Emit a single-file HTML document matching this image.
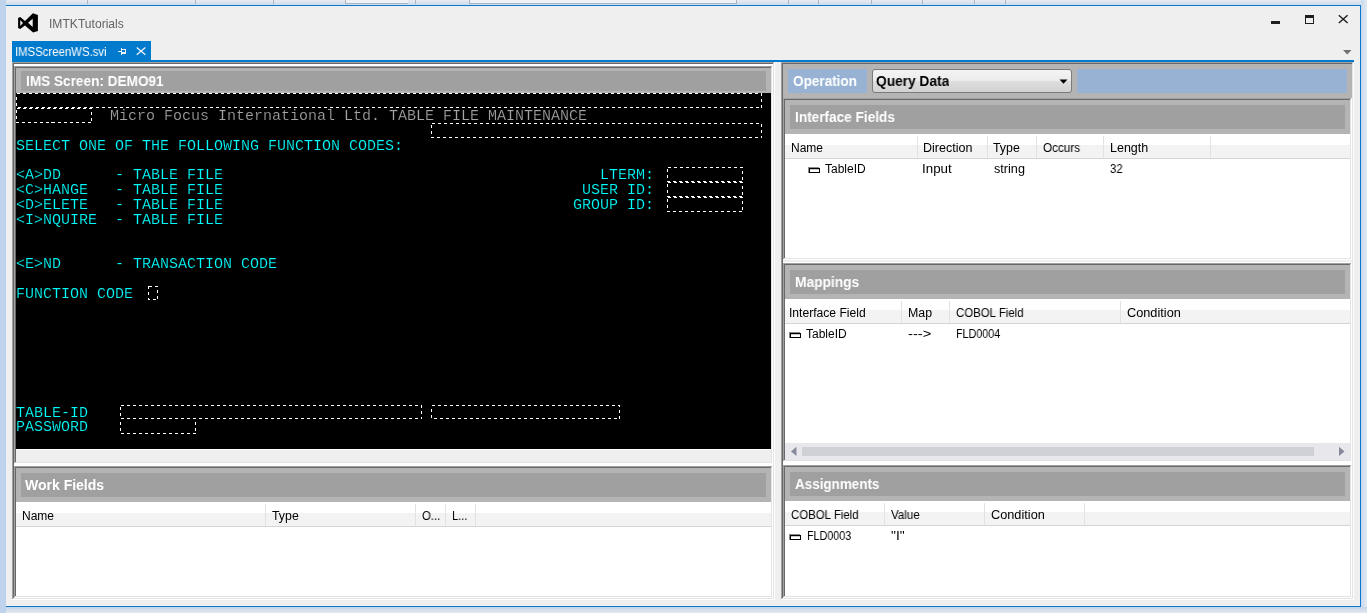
<!DOCTYPE html>
<html><head><meta charset="utf-8"><style>
html,body{margin:0;padding:0;}
body{width:1367px;height:613px;overflow:hidden;position:relative;font-family:"Liberation Sans",sans-serif;}
div,span,svg{position:absolute;}
span{white-space:pre;line-height:1;will-change:transform;}
.title{font-size:12px;color:#626262;}
.tab{font-size:12px;color:#fff;}
.hdr{font-size:14px;font-weight:bold;color:#fff;}
.hdr.dark{color:#000;}
.cell{font-size:12px;color:#000;}
.mono{font-family:"Liberation Mono",monospace;font-size:15px;letter-spacing:0px;-webkit-text-stroke:0.2px #000;}
</style></head><body>
<div style="left:0px;top:0px;width:1367px;height:613px;background:#bfd4ec;"></div>
<div style="left:6px;top:0px;width:1361px;height:5px;background:linear-gradient(#e8ebf0,#cddbea);"></div>
<div style="left:5px;top:0px;width:1px;height:613px;background:#b9d0ea;"></div>
<div style="left:1361px;top:0px;width:6px;height:613px;background:linear-gradient(90deg,#c7d9ee,#e2e9f2);"></div>
<div style="left:6px;top:607px;width:1361px;height:6px;background:linear-gradient(#c3d5ea,#e4e8ee);"></div>
<div style="left:345px;top:0px;width:63px;height:4px;background:#eef1f5;border-left:1px solid #a9b5c3;border-bottom:1px solid #a9b5c3;box-sizing:border-box"></div>
<div style="left:469px;top:0px;width:268px;height:4px;background:#eef1f5;border-left:1px solid #a9b5c3;border-right:1px solid #a9b5c3;border-bottom:1px solid #a9b5c3;box-sizing:border-box"></div>
<div style="left:87px;top:0px;width:1px;height:4px;background:#aab7c6;"></div>
<div style="left:195px;top:0px;width:1px;height:4px;background:#aab7c6;"></div>
<div style="left:273px;top:0px;width:1px;height:4px;background:#aab7c6;"></div>
<div style="left:415px;top:0px;width:1px;height:4px;background:#aab7c6;"></div>
<div style="left:788px;top:0px;width:1px;height:4px;background:#aab7c6;"></div>
<div style="left:818px;top:0px;width:1px;height:4px;background:#aab7c6;"></div>
<div style="left:871px;top:0px;width:1px;height:4px;background:#aab7c6;"></div>
<div style="left:922px;top:0px;width:1px;height:4px;background:#aab7c6;"></div>
<div style="left:974px;top:0px;width:1px;height:4px;background:#aab7c6;"></div>
<div style="left:1005px;top:0px;width:1px;height:4px;background:#aab7c6;"></div>
<div style="left:6px;top:6px;width:1354px;height:600px;background:#efefef;"></div>
<div style="left:6px;top:5px;width:1355px;height:1px;background:#0a78cf;"></div>
<div style="left:1360px;top:5px;width:1px;height:602px;background:#0a78cf;"></div>
<div style="left:6px;top:606px;width:1355px;height:1px;background:#0a78cf;"></div>
<svg style="position:absolute;left:0;top:0" width="60" height="40"><path fill="#000" fill-rule="evenodd" d="M32.9,13.2 L37.9,15.1 L37.9,30.9 L33.1,32.6 L25,25.4 L20.2,29 L18.1,27.9 L18.1,18.1 L20.2,17 L25,20.9 Z M28.1,22.8 L32.7,18.7 L32.7,27.1 Z M20.3,20.1 L22.9,23.1 L20.3,26.1 Z"/></svg>
<span class="title" style="left:48.99px;top:18px;transform:scaleX(1.0078);transform-origin:0 0;">IMTKTutorials</span>
<div style="left:1271px;top:21px;width:9px;height:3px;background:#1e1e1e;"></div>
<div style="left:1305px;top:15px;width:9px;height:9px;background:transparent;border:1px solid #1e1e1e;border-top-width:3px;box-sizing:border-box"></div>
<svg style="position:absolute;left:1336px;top:13px" width="14" height="13"><path d="M2.8,2.3 L11.6,10 M11.6,2.3 L2.8,10" stroke="#1e1e1e" stroke-width="1.4"/></svg>
<div style="left:12px;top:41px;width:139px;height:21px;background:#007acc;"></div>
<div style="left:12px;top:60px;width:1342px;height:2px;background:#007acc;"></div>
<span class="tab" style="left:15.05px;top:46px;transform:scaleX(0.9472);transform-origin:0 0;">IMSScreenWS.svi</span>
<svg style="position:absolute;left:116px;top:46px" width="14" height="12" shape-rendering="crispEdges"><path fill="#eaf1f8" d="M2,5 h4 v1 h-4 z M5,2 h1 v7 h-1 z M6,3 h4 v1 h-4 z M9,3 h1 v5 h-1 z M6,6 h4 v2 h-4 z"/></svg>
<svg style="position:absolute;left:134px;top:45px" width="14" height="12"><path d="M2.7,2.4 L11.4,9.7 M11.4,2.4 L2.7,9.7" stroke="#eaf1f8" stroke-width="1.3"/></svg>
<svg style="position:absolute;left:1342px;top:49px" width="11" height="7"><path d="M1,1 L9.5,1 L5.25,5.5 Z" fill="#717171"/></svg>
<div style="left:14px;top:64px;width:759px;height:534px;background:#ffffff;"></div>
<div style="left:12px;top:62px;width:763px;height:1px;background:#a0a0a0;"></div>
<div style="left:12px;top:62px;width:1px;height:538px;background:#a0a0a0;"></div>
<div style="left:13px;top:63px;width:761px;height:1px;background:#696969;"></div>
<div style="left:13px;top:63px;width:1px;height:536px;background:#696969;"></div>
<div style="left:12px;top:599px;width:763px;height:1px;background:#ffffff;"></div>
<div style="left:774px;top:62px;width:1px;height:538px;background:#ffffff;"></div>
<div style="left:13px;top:598px;width:761px;height:1px;background:#e3e3e3;"></div>
<div style="left:773px;top:63px;width:1px;height:536px;background:#e3e3e3;"></div>
<div style="left:16px;top:68px;width:755px;height:394px;background:#efefef;"></div>
<div style="left:14px;top:66px;width:759px;height:1px;background:#a0a0a0;"></div>
<div style="left:14px;top:66px;width:1px;height:398px;background:#a0a0a0;"></div>
<div style="left:15px;top:67px;width:757px;height:1px;background:#696969;"></div>
<div style="left:15px;top:67px;width:1px;height:396px;background:#696969;"></div>
<div style="left:14px;top:463px;width:759px;height:1px;background:#ffffff;"></div>
<div style="left:772px;top:66px;width:1px;height:398px;background:#ffffff;"></div>
<div style="left:15px;top:462px;width:757px;height:1px;background:#e3e3e3;"></div>
<div style="left:771px;top:67px;width:1px;height:396px;background:#e3e3e3;"></div>
<div style="left:16px;top:68px;width:755px;height:25px;background:#b4b4b4;"></div>
<div style="left:21px;top:71px;width:745px;height:20px;background:#a0a0a0;"></div>
<span class="hdr" style="left:25.75px;top:74px;transform:scaleX(0.9717);transform-origin:0 0;">IMS Screen: DEMO91</span>
<div style="left:16px;top:93px;width:755px;height:356px;background:#000;"></div>
<div style="left:16px;top:449px;width:755px;height:1px;background:#ffffff;"></div>
<div style="left:16px;top:468px;width:755px;height:128px;background:#ffffff;"></div>
<div style="left:14px;top:466px;width:759px;height:1px;background:#a0a0a0;"></div>
<div style="left:14px;top:466px;width:1px;height:132px;background:#a0a0a0;"></div>
<div style="left:15px;top:467px;width:757px;height:1px;background:#696969;"></div>
<div style="left:15px;top:467px;width:1px;height:130px;background:#696969;"></div>
<div style="left:14px;top:597px;width:759px;height:1px;background:#ffffff;"></div>
<div style="left:772px;top:466px;width:1px;height:132px;background:#ffffff;"></div>
<div style="left:15px;top:596px;width:757px;height:1px;background:#e3e3e3;"></div>
<div style="left:771px;top:467px;width:1px;height:130px;background:#e3e3e3;"></div>
<div style="left:16px;top:468px;width:755px;height:34px;background:#b4b4b4;"></div>
<div style="left:21px;top:473px;width:745px;height:24px;background:#a0a0a0;"></div>
<span class="hdr" style="left:24.95px;top:478px;">Work Fields</span>
<div style="left:783px;top:64px;width:569px;height:534px;background:#ffffff;"></div>
<div style="left:781px;top:62px;width:573px;height:1px;background:#a0a0a0;"></div>
<div style="left:781px;top:62px;width:1px;height:538px;background:#a0a0a0;"></div>
<div style="left:782px;top:63px;width:571px;height:1px;background:#696969;"></div>
<div style="left:782px;top:63px;width:1px;height:536px;background:#696969;"></div>
<div style="left:781px;top:599px;width:573px;height:1px;background:#ffffff;"></div>
<div style="left:1353px;top:62px;width:1px;height:538px;background:#ffffff;"></div>
<div style="left:782px;top:598px;width:571px;height:1px;background:#e3e3e3;"></div>
<div style="left:1352px;top:63px;width:1px;height:536px;background:#e3e3e3;"></div>
<div style="left:783px;top:64px;width:569px;height:34px;background:#b4b4b4;"></div>
<div style="left:788px;top:69px;width:79px;height:24px;background:#97b2d2;"></div>
<span class="hdr" style="left:792.85px;top:74px;transform:scaleX(0.967);transform-origin:0 0;">Operation</span>
<div style="left:872px;top:69px;width:200px;height:24px;background:linear-gradient(#f3f3f3 0%,#ececec 48%,#dedede 52%,#d2d2d2 100%);border:1px solid #7c7c7c;border-radius:3px;box-sizing:border-box"></div>
<span class="hdr dark" style="left:875.85px;top:74px;transform:scaleX(0.9798);transform-origin:0 0;">Query Data</span>
<svg style="position:absolute;left:1059px;top:79px" width="10" height="6"><path d="M0.5,0.5 L8.5,0.5 L4.5,4.8 Z" fill="#000"/></svg>
<div style="left:1077px;top:69px;width:270px;height:24px;background:#97b2d2;"></div>
<div style="left:783px;top:260px;width:569px;height:2px;background:#efefef;"></div>
<div style="left:785px;top:100px;width:565px;height:158px;background:#ffffff;"></div>
<div style="left:783px;top:98px;width:569px;height:1px;background:#a0a0a0;"></div>
<div style="left:783px;top:98px;width:1px;height:162px;background:#a0a0a0;"></div>
<div style="left:784px;top:99px;width:567px;height:1px;background:#696969;"></div>
<div style="left:784px;top:99px;width:1px;height:160px;background:#696969;"></div>
<div style="left:783px;top:259px;width:569px;height:1px;background:#ffffff;"></div>
<div style="left:1351px;top:98px;width:1px;height:162px;background:#ffffff;"></div>
<div style="left:784px;top:258px;width:567px;height:1px;background:#e3e3e3;"></div>
<div style="left:1350px;top:99px;width:1px;height:160px;background:#e3e3e3;"></div>
<div style="left:785px;top:100px;width:565px;height:34px;background:#b4b4b4;"></div>
<div style="left:790px;top:105px;width:555px;height:24px;background:#a0a0a0;"></div>
<span class="hdr" style="left:794.65px;top:110px;transform:scaleX(0.9726);transform-origin:0 0;">Interface Fields</span>
<div style="left:785px;top:265px;width:565px;height:195px;background:#ffffff;"></div>
<div style="left:783px;top:263px;width:569px;height:1px;background:#a0a0a0;"></div>
<div style="left:783px;top:263px;width:1px;height:199px;background:#a0a0a0;"></div>
<div style="left:784px;top:264px;width:567px;height:1px;background:#696969;"></div>
<div style="left:784px;top:264px;width:1px;height:197px;background:#696969;"></div>
<div style="left:783px;top:461px;width:569px;height:1px;background:#ffffff;"></div>
<div style="left:1351px;top:263px;width:1px;height:199px;background:#ffffff;"></div>
<div style="left:784px;top:460px;width:567px;height:1px;background:#e3e3e3;"></div>
<div style="left:1350px;top:264px;width:1px;height:197px;background:#e3e3e3;"></div>
<div style="left:785px;top:265px;width:565px;height:34px;background:#b4b4b4;"></div>
<div style="left:790px;top:270px;width:555px;height:24px;background:#a0a0a0;"></div>
<span class="hdr" style="left:794.65px;top:275px;transform:scaleX(0.9825);transform-origin:0 0;">Mappings</span>
<div style="left:785px;top:467px;width:565px;height:129px;background:#ffffff;"></div>
<div style="left:783px;top:465px;width:569px;height:1px;background:#a0a0a0;"></div>
<div style="left:783px;top:465px;width:1px;height:133px;background:#a0a0a0;"></div>
<div style="left:784px;top:466px;width:567px;height:1px;background:#696969;"></div>
<div style="left:784px;top:466px;width:1px;height:131px;background:#696969;"></div>
<div style="left:783px;top:597px;width:569px;height:1px;background:#ffffff;"></div>
<div style="left:1351px;top:465px;width:1px;height:133px;background:#ffffff;"></div>
<div style="left:784px;top:596px;width:567px;height:1px;background:#e3e3e3;"></div>
<div style="left:1350px;top:466px;width:1px;height:131px;background:#e3e3e3;"></div>
<div style="left:785px;top:467px;width:565px;height:34px;background:#b4b4b4;"></div>
<div style="left:790px;top:472px;width:555px;height:24px;background:#a0a0a0;"></div>
<span class="hdr" style="left:794.65px;top:477px;transform:scaleX(0.96);transform-origin:0 0;">Assignments</span>
<div style="left:785px;top:443px;width:565px;height:17px;background:#e8e8ec;"></div>
<div style="left:802px;top:447px;width:512px;height:9px;background:#d0d1d7;"></div>
<svg style="position:absolute;left:789px;top:446px" width="10" height="11"><path d="M7.5,0.8 L7.5,10 L2,5.4 Z" fill="#868999"/></svg>
<svg style="position:absolute;left:1337px;top:446px" width="10" height="11"><path d="M2,0.8 L2,10 L7.5,5.4 Z" fill="#868999"/></svg>
<div style="left:16px;top:513px;width:755px;height:13px;background:#f3f3f3;"></div>
<div style="left:16px;top:526px;width:755px;height:1px;background:#d5d5d5;"></div>
<div style="left:265px;top:504px;width:1px;height:22px;background:#e2e2e2;"></div>
<div style="left:415px;top:504px;width:1px;height:22px;background:#e2e2e2;"></div>
<div style="left:445px;top:504px;width:1px;height:22px;background:#e2e2e2;"></div>
<div style="left:475px;top:504px;width:1px;height:22px;background:#e2e2e2;"></div>
<span class="cell" style="left:21.65px;top:510px;transform:scaleX(0.9896);transform-origin:0 0;">Name</span>
<span class="cell" style="left:271.55px;top:510px;transform:scaleX(1.0288);transform-origin:0 0;">Type</span>
<span class="cell" style="left:422.05px;top:510px;transform:scaleX(0.9473);transform-origin:0 0;">O...</span>
<span class="cell" style="left:451.95px;top:510px;transform:scaleX(0.924);transform-origin:0 0;">L...</span>
<div style="left:785px;top:145px;width:565px;height:13px;background:#f3f3f3;"></div>
<div style="left:785px;top:158px;width:565px;height:1px;background:#d5d5d5;"></div>
<div style="left:917px;top:136px;width:1px;height:22px;background:#e2e2e2;"></div>
<div style="left:987px;top:136px;width:1px;height:22px;background:#e2e2e2;"></div>
<div style="left:1036px;top:136px;width:1px;height:22px;background:#e2e2e2;"></div>
<div style="left:1103px;top:136px;width:1px;height:22px;background:#e2e2e2;"></div>
<div style="left:1210px;top:136px;width:1px;height:22px;background:#e2e2e2;"></div>
<span class="cell" style="left:790.95px;top:142px;transform:scaleX(0.9896);transform-origin:0 0;">Name</span>
<span class="cell" style="left:923.35px;top:142px;transform:scaleX(1.0434);transform-origin:0 0;">Direction</span>
<span class="cell" style="left:993.25px;top:142px;transform:scaleX(1.0288);transform-origin:0 0;">Type</span>
<span class="cell" style="left:1042.85px;top:142px;transform:scaleX(0.9762);transform-origin:0 0;">Occurs</span>
<span class="cell" style="left:1109.55px;top:142px;transform:scaleX(1.0408);transform-origin:0 0;">Length</span>
<div style="left:785px;top:310px;width:565px;height:13px;background:#f3f3f3;"></div>
<div style="left:785px;top:323px;width:565px;height:1px;background:#d5d5d5;"></div>
<div style="left:901px;top:301px;width:1px;height:22px;background:#e2e2e2;"></div>
<div style="left:949px;top:301px;width:1px;height:22px;background:#e2e2e2;"></div>
<div style="left:1120px;top:301px;width:1px;height:22px;background:#e2e2e2;"></div>
<span class="cell" style="left:788.94px;top:307px;transform:scaleX(1.0086);transform-origin:0 0;">Interface Field</span>
<span class="cell" style="left:907.75px;top:307px;transform:scaleX(1.0308);transform-origin:0 0;">Map</span>
<span class="cell" style="left:955.85px;top:307px;transform:scaleX(0.9522);transform-origin:0 0;">COBOL Field</span>
<span class="cell" style="left:1126.85px;top:307px;transform:scaleX(1.0614);transform-origin:0 0;">Condition</span>
<div style="left:785px;top:512px;width:565px;height:13px;background:#f3f3f3;"></div>
<div style="left:785px;top:525px;width:565px;height:1px;background:#d5d5d5;"></div>
<div style="left:884px;top:503px;width:1px;height:22px;background:#e2e2e2;"></div>
<div style="left:984px;top:503px;width:1px;height:22px;background:#e2e2e2;"></div>
<div style="left:1084px;top:503px;width:1px;height:22px;background:#e2e2e2;"></div>
<span class="cell" style="left:790.55px;top:509px;transform:scaleX(0.9522);transform-origin:0 0;">COBOL Field</span>
<span class="cell" style="left:890.85px;top:509px;transform:scaleX(0.9626);transform-origin:0 0;">Value</span>
<span class="cell" style="left:990.65px;top:509px;transform:scaleX(1.0614);transform-origin:0 0;">Condition</span>
<svg style="position:absolute;left:808px;top:167px" width="13" height="7" shape-rendering="crispEdges"><path fill="#8a8a8a" d="M0,0 h11 v1 h-11 z M0,0 h1 v6 h-1 z"/><path fill="#000" d="M1,1 h11 v1 h-11 z M1,1 h1 v5 h-1 z M11,1 h1 v5 h-1 z M1,5 h11 v1 h-11 z"/><path fill="#c8c8c8" d="M2,2 h9 v1 h-9 z"/></svg>
<span class="cell" style="left:825.35px;top:163px;transform:scaleX(0.9922);transform-origin:0 0;">TableID</span>
<span class="cell" style="left:921.94px;top:163px;transform:scaleX(1.1117);transform-origin:0 0;">Input</span>
<span class="cell" style="left:993.85px;top:163px;transform:scaleX(1.0534);transform-origin:0 0;">string</span>
<span class="cell" style="left:1109.55px;top:163px;transform:scaleX(0.9434);transform-origin:0 0;">32</span>
<svg style="position:absolute;left:789px;top:332px" width="13" height="7" shape-rendering="crispEdges"><path fill="#8a8a8a" d="M0,0 h11 v1 h-11 z M0,0 h1 v6 h-1 z"/><path fill="#000" d="M1,1 h11 v1 h-11 z M1,1 h1 v5 h-1 z M11,1 h1 v5 h-1 z M1,5 h11 v1 h-11 z"/><path fill="#c8c8c8" d="M2,2 h9 v1 h-9 z"/></svg>
<span class="cell" style="left:806.35px;top:328px;transform:scaleX(0.9922);transform-origin:0 0;">TableID</span>
<span class="cell" style="left:907.75px;top:328px;transform:scaleX(1.2218);transform-origin:0 0;">---&gt;</span>
<span class="cell" style="left:955.85px;top:328px;transform:scaleX(0.8955);transform-origin:0 0;">FLD0004</span>
<svg style="position:absolute;left:789px;top:534px" width="13" height="7" shape-rendering="crispEdges"><path fill="#8a8a8a" d="M0,0 h11 v1 h-11 z M0,0 h1 v6 h-1 z"/><path fill="#000" d="M1,1 h11 v1 h-11 z M1,1 h1 v5 h-1 z M11,1 h1 v5 h-1 z M1,5 h11 v1 h-11 z"/><path fill="#c8c8c8" d="M2,2 h9 v1 h-9 z"/></svg>
<span class="cell" style="left:806.55px;top:530px;transform:scaleX(0.8955);transform-origin:0 0;">FLD0003</span>
<span class="cell" style="left:890.85px;top:530px;transform:scaleX(1.1558);transform-origin:0 0;">&quot;I&quot;</span>
<span class="mono" style="left:109.5px;top:109px;color:#a4a4a4">Micro Focus International Ltd. TABLE FILE MAINTENANCE</span>
<span class="mono" style="left:15.8px;top:139px;color:#00ffff">SELECT ONE OF THE FOLLOWING FUNCTION CODES:</span>
<span class="mono" style="left:15.8px;top:168px;color:#00ffff">&lt;A&gt;DD      - TABLE FILE</span>
<span class="mono" style="left:15.8px;top:183px;color:#00ffff">&lt;C&gt;HANGE   - TABLE FILE</span>
<span class="mono" style="left:15.8px;top:198px;color:#00ffff">&lt;D&gt;ELETE   - TABLE FILE</span>
<span class="mono" style="left:15.8px;top:213px;color:#00ffff">&lt;I&gt;NQUIRE  - TABLE FILE</span>
<span class="mono" style="left:15.8px;top:257px;color:#00ffff">&lt;E&gt;ND      - TRANSACTION CODE</span>
<span class="mono" style="left:15.8px;top:287px;color:#00ffff">FUNCTION CODE</span>
<span class="mono" style="left:15.8px;top:406px;color:#00ffff">TABLE-ID</span>
<span class="mono" style="left:15.8px;top:420px;color:#00ffff">PASSWORD</span>
<span class="mono" style="left:600.3px;top:168px;color:#00ffff">LTERM:</span>
<span class="mono" style="left:582.3px;top:183px;color:#00ffff">USER ID:</span>
<span class="mono" style="left:572.8px;top:198px;color:#00ffff">GROUP ID:</span>
<svg style="position:absolute;left:0;top:0" width="1367" height="613" shape-rendering="crispEdges"><rect x="16.5" y="93.5" width="745" height="14" fill="none" stroke="#fff" stroke-width="1" stroke-dasharray="3 3"/><rect x="16.5" y="108.5" width="75" height="14" fill="none" stroke="#fff" stroke-width="1" stroke-dasharray="3 3"/><rect x="431.5" y="123.5" width="330" height="14" fill="none" stroke="#fff" stroke-width="1" stroke-dasharray="3 3"/><rect x="667.5" y="167.5" width="75" height="14" fill="none" stroke="#fff" stroke-width="1" stroke-dasharray="3 3"/><rect x="667.5" y="182.5" width="75" height="14" fill="none" stroke="#fff" stroke-width="1" stroke-dasharray="3 3"/><rect x="667.5" y="197.5" width="75" height="14" fill="none" stroke="#fff" stroke-width="1" stroke-dasharray="3 3"/><rect x="148.5" y="286.5" width="9" height="13" fill="none" stroke="#fff" stroke-width="1" stroke-dasharray="3 3"/><rect x="120.5" y="405.5" width="301" height="13" fill="none" stroke="#fff" stroke-width="1" stroke-dasharray="3 3"/><rect x="431.5" y="405.5" width="188" height="13" fill="none" stroke="#fff" stroke-width="1" stroke-dasharray="3 3"/><rect x="120.5" y="418.5" width="75" height="15" fill="none" stroke="#fff" stroke-width="1" stroke-dasharray="3 3"/></svg>
</body></html>
